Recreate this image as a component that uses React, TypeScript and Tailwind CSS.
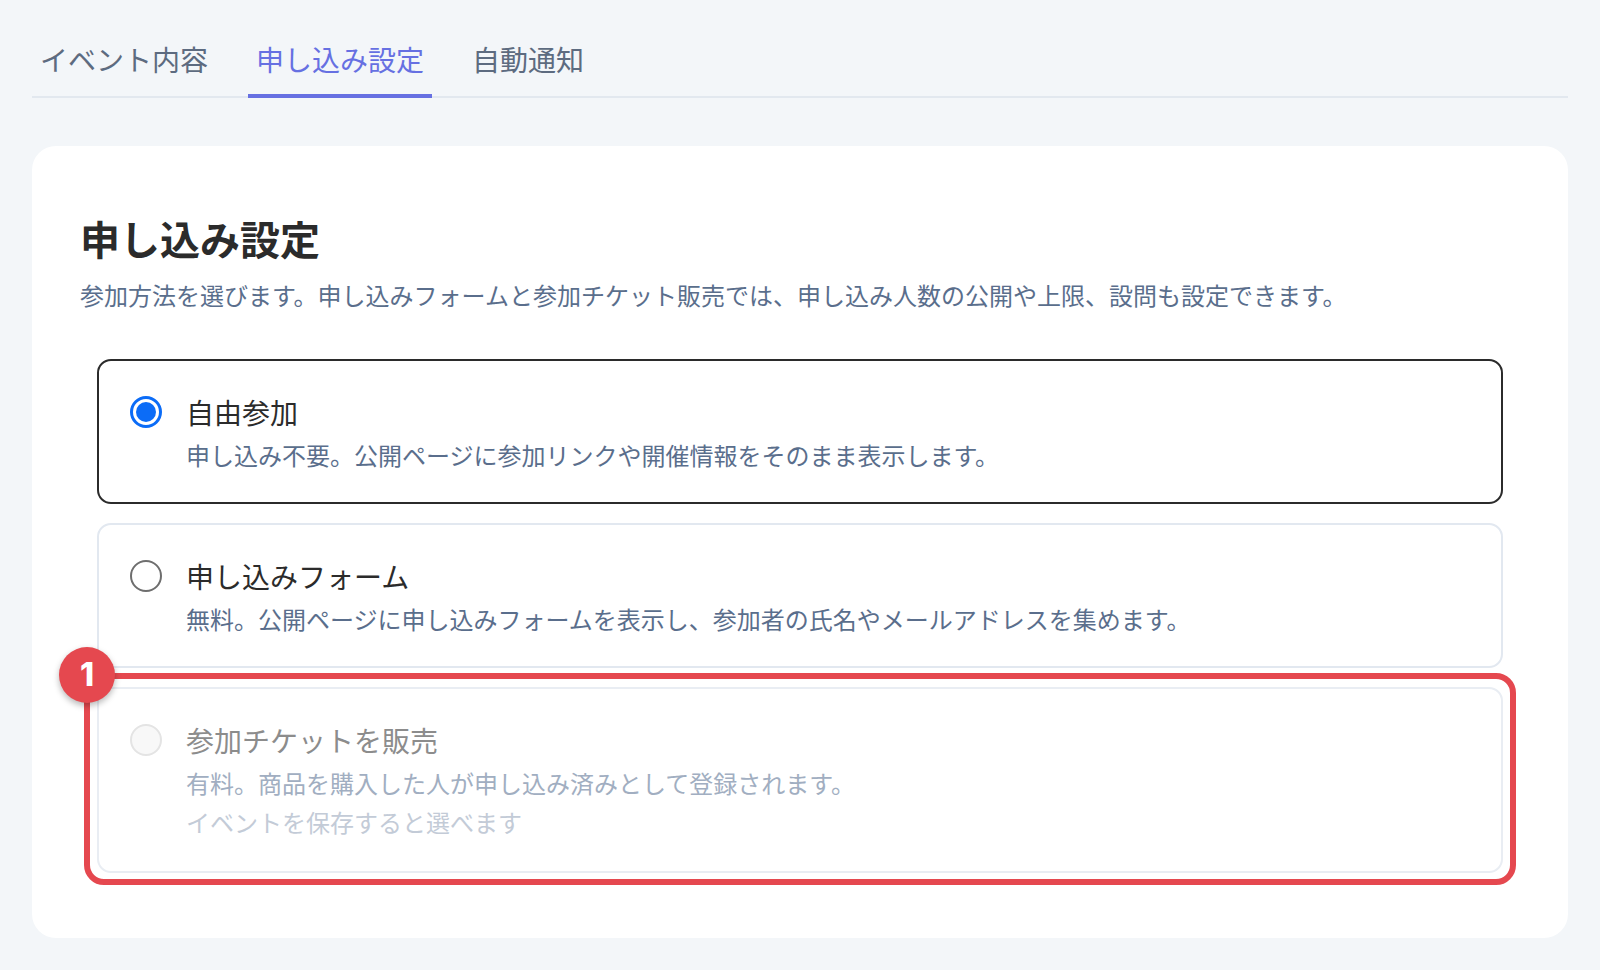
import React from "react";

const jp = { fontFamily: '"Noto Sans CJK JP", "Noto Sans", sans-serif' };

function Tab({ label, active }: { label: string; active?: boolean }) {
  return (
    <div
      className={
        "-mb-[2px] border-b-4 px-[8px] pt-[41px] pb-[17px] text-[28px] leading-[36px] " +
        (active ? "border-[#6670e2] text-[#6670e2]" : "border-transparent text-[#5d6b80]")
      }
    >
      {label}
    </div>
  );
}

function Radio({ state }: { state: "on" | "off" | "disabled" }) {
  if (state === "on") {
    return (
      <div className="flex h-[32px] w-[32px] items-center justify-center rounded-full border-[3px] border-[#0b6cf7] bg-white">
        <div className="h-[20px] w-[20px] rounded-full bg-[#0b6cf7]" />
      </div>
    );
  }
  if (state === "off") {
    return <div className="h-[32px] w-[32px] rounded-full border-2 border-[#6e6e6e] bg-white" />;
  }
  return <div className="h-[32px] w-[32px] rounded-full border-2 border-[#e4e4e4] bg-[#f8f8f8]" />;
}

function Option({
  title,
  desc,
  note,
  state,
}: {
  title: string;
  desc: string;
  note?: string;
  state: "on" | "off" | "disabled";
}) {
  const disabled = state === "disabled";
  const border =
    state === "on" ? "border-[#2b2b2b]" : disabled ? "border-[#e9edf3]" : "border-[#e2e8f0]";
  return (
    <div className={"flex rounded-[14px] border-2 bg-white pl-[31px] pr-[30px] pt-[31px] " + border + (note ? " pb-[31px]" : " pb-[29px]")}>
      <div className="flex h-[40px] items-center">
        <Radio state={state} />
      </div>
      <div className="ml-[24px] flex flex-col">
        <div className={"text-[28px] leading-[40px] " + (disabled ? "text-[#8c8c8c]" : "text-[#2b2b2b]")}>
          {title}
        </div>
        <div className={"mt-[5px] text-[24px] leading-[36px] " + (disabled ? "text-[#a1aec1]" : "text-[#5a6e8c]")}>
          {desc}
        </div>
        {note && <div className="mt-[3px] text-[24px] leading-[36px] text-[#c3cbd7]">{note}</div>}
      </div>
    </div>
  );
}

export default function App() {
  return (
    <div className="min-h-screen bg-[#f3f6f9] px-[32px] pb-[32px]" style={jp}>
      <div className="flex gap-[32px] border-b-2 border-[#e2e8ef]">
        <Tab label="イベント内容" />
        <Tab label="申し込み設定" active />
        <Tab label="自動通知" />
      </div>

      <div className="mt-[48px] rounded-3xl bg-white pl-[48px] pr-[50px] pt-[64px] pb-[65px]">
        <h1 className="text-[40px] font-bold leading-[56px] text-[#2b2b2b]">申し込み設定</h1>
        <p className="mt-[11px] text-[24px] leading-[36px] text-[#5a6e8c]">
          参加方法を選びます。申し込みフォームと参加チケット販売では、申し込み人数の公開や上限、設問も設定できます。
        </p>

        <div className="mt-[46px] flex flex-col gap-[19px] pl-[17px] pr-[15px]">
          <Option
            state="on"
            title="自由参加"
            desc="申し込み不要。公開ページに参加リンクや開催情報をそのまま表示します。"
          />
          <Option
            state="off"
            title="申し込みフォーム"
            desc="無料。公開ページに申し込みフォームを表示し、参加者の氏名やメールアドレスを集めます。"
          />
          <div className="relative">
            <Option
              state="disabled"
              title="参加チケットを販売"
              desc="有料。商品を購入した人が申し込み済みとして登録されます。"
              note="イベントを保存すると選べます"
            />
            <div className="pointer-events-none absolute -left-[13px] -right-[13px] -top-[14px] -bottom-[12px] rounded-[20px] border-[6px] border-[#e5484f]" />
            <div
              className="absolute -left-[38px] -top-[40px] flex h-[56px] w-[56px] items-center justify-center rounded-full bg-[#e5484f] text-[32px] font-extrabold leading-none text-white shadow-[0_3px_6px_rgba(0,0,0,0.28)]"
              style={{ fontFamily: "Inter, sans-serif" }}
            >
              1
            </div>
          </div>
        </div>
      </div>
    </div>
  );
}
